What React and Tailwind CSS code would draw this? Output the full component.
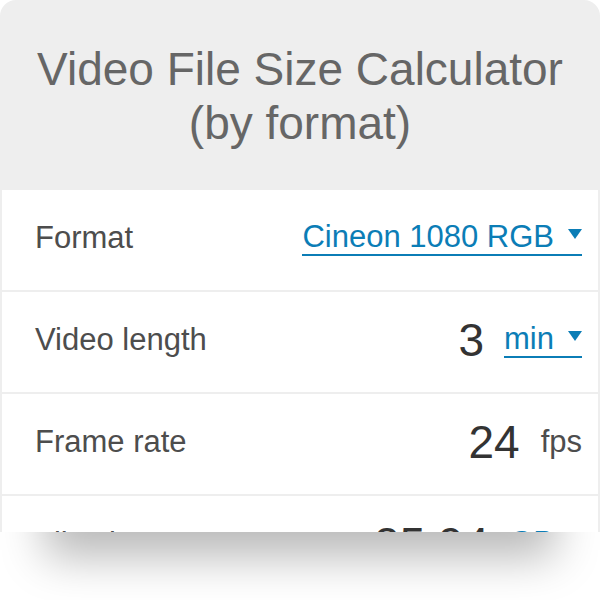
import React from 'react';

const Row = ({ label, children, last }) => (
    <div className={`flex items-center justify-between h-[100px] bg-white pl-[33px] pr-[16px] pb-[4px] ${last ? '' : 'mb-[2px]'}`}>
        <span className="text-[31px] text-[#4d4d4d]">{label}</span>
        <div className="flex items-center">{children}</div>
    </div>
);

const Unit = ({ children, link }) =>
    link ? (
        <span className="text-[31px] leading-[34px] text-[#0b7db6] border-b-2 border-[#0b7db6] whitespace-nowrap">
            {children}
            <svg width="14" height="10" viewBox="0 0 14 10" className="inline-block ml-[14px] relative -top-[5px]">
                <path d="M0 0 L14 0 L7 10 Z" fill="currentColor" />
            </svg>
        </span>
    ) : (
        <span className="text-[31px] leading-[34px] text-[#4d4d4d]">{children}</span>
    );

export default function App() {
    return (
        <div className="w-[600px] h-[600px] bg-white overflow-hidden" style={{ fontFamily: '"Liberation Sans", Arial, sans-serif' }}>
            <div className="h-[532px] overflow-hidden bg-[#eeeeee] rounded-t-[16px] px-[2px]">
                <h1 className="pt-[42px] pb-[40px] text-center text-[46px] leading-[54px] text-[#666666] font-normal">
                    Video File Size Calculator
                    <br />
                    (by format)
                </h1>
                <Row label="Format">
                    <Unit link>Cineon 1080 RGB</Unit>
                </Row>
                <Row label="Video length">
                    <span className="text-[46px] leading-[52px] text-[#333333] mr-[20px]">3</span>
                    <Unit link>min</Unit>
                </Row>
                <Row label="Frame rate">
                    <span className="text-[46px] leading-[52px] text-[#333333] mr-[21px]">24</span>
                    <Unit>fps</Unit>
                </Row>
                <Row label="File size" last>
                    <span className="text-[46px] leading-[52px] text-[#333333] mr-[20px]">25.94</span>
                    <Unit link>GB</Unit>
                </Row>
            </div>
            <div className="relative h-[68px] overflow-hidden bg-white">
                <div className="absolute left-[70px] right-[70px] top-[-40px] h-[40px] bg-[#bdbdbd] shadow-[0_0_45px_25px_rgba(0,0,0,0.28)]" />
            </div>
        </div>
    );
}
